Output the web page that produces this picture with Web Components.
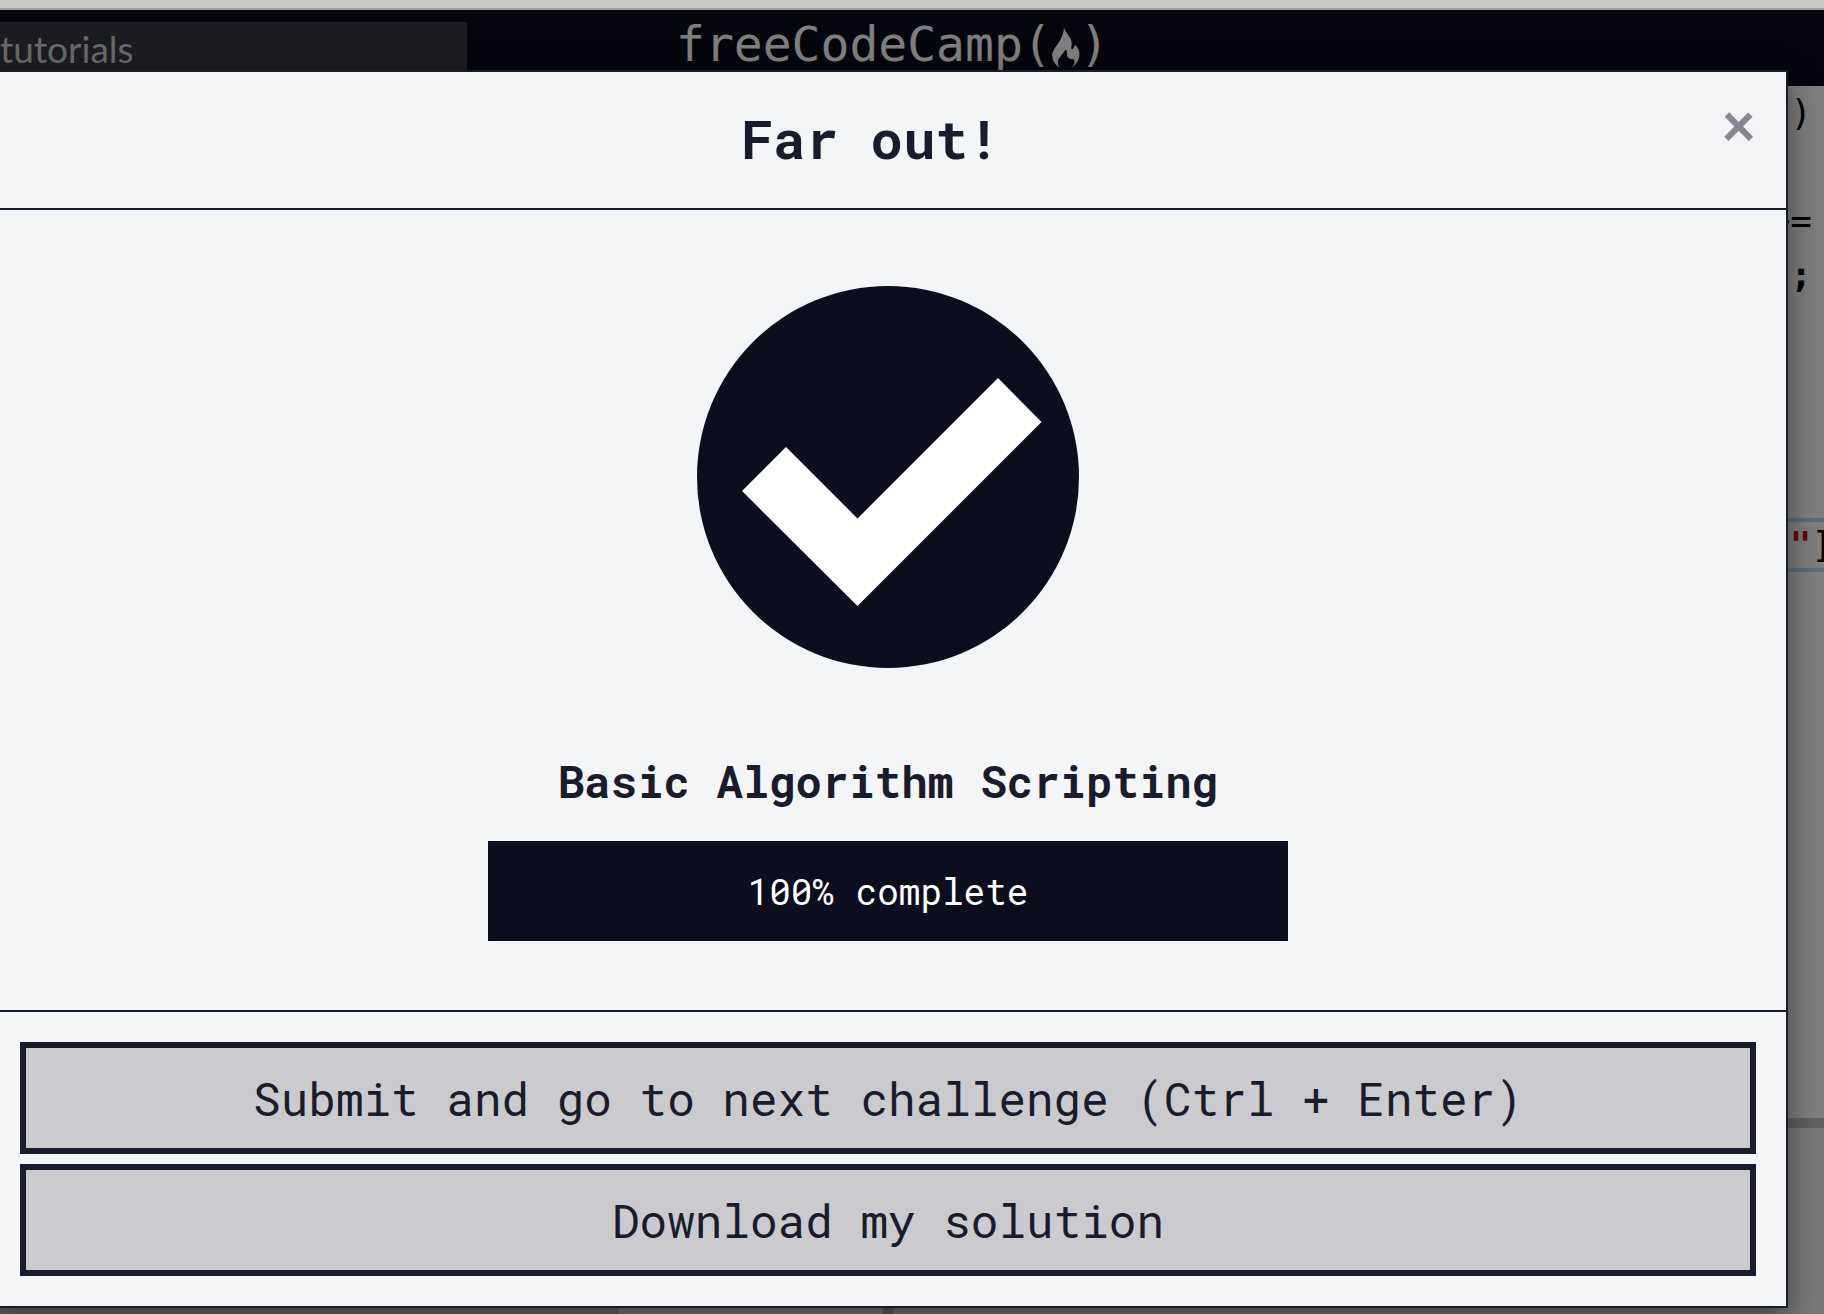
<!DOCTYPE html>
<html lang="en">
<head>
<meta charset="utf-8">
<title>freeCodeCamp</title>
<style>
  html, body { margin: 0; height: 100%; overflow: hidden; }
  body {
    --ink: #1a1b2c;
    --deep: #0c0d1d;
    --paper: #f4f5f7;
    --mono: "Roboto Mono", "DejaVu Sans Mono", monospace;
    font-family: var(--mono);
    color: var(--ink);
  }
</style>
</head>
<body>
<learn-app>
  <site-header slot="header"></site-header>
  <code-workspace slot="main"></code-workspace>
  <completion-modal slot="modal" heading="Far out!">
    <check-badge></check-badge>
    <block-progress value="100">Basic Algorithm Scripting</block-progress>
    <action-button slot="actions">Submit and go to next challenge (Ctrl + Enter)</action-button>
    <action-button slot="actions">Download my solution</action-button>
  </completion-modal>
</learn-app>

<script>
const define = (name, html, setup) => {
  const template = document.createElement('template');
  template.innerHTML = html;
  customElements.define(name, class extends HTMLElement {
    constructor() {
      super();
      this.attachShadow({ mode: 'open' }).append(template.content.cloneNode(true));
    }
    connectedCallback() { if (setup) setup(this, this.shadowRoot); }
  });
};

define('learn-app', `
  <style>
    :host { display: flex; flex-direction: column; height: 100vh; }
    .chrome { flex: none; height: 8px; background: #cacac9; border-bottom: 2px solid #a0a0a0; }
    .stage { flex: 1; min-height: 0; position: relative; display: flex; flex-direction: column; overflow: hidden; }
    .overlay { position: absolute; inset: 0; background: rgba(0, 0, 0, .5); }
    ::slotted([slot="main"]) { flex: 1; min-height: 0; }
  </style>
  <div class="chrome"></div>
  <div class="stage">
    <slot name="header"></slot>
    <slot name="main"></slot>
    <div class="overlay"><slot name="modal"></slot></div>
  </div>`);

define('site-header', `
  <style>
    :host { display: flex; align-items: flex-start; height: 76px; background: #0a0a1c; flex: none; }
    input {
      box-sizing: border-box; width: 467px; height: 54px; margin: 12px 0 0; padding: 0 0 2px; border: 0; border-radius: 0;
      background: #383846; color: #fff; font: 37px/52px Lato, sans-serif;
    }
    input::placeholder { color: #d2d2d2; opacity: 1; }
    a {
      display: flex; align-items: center; margin: 4px 0 0 209px; color: #fff; text-decoration: none;
      font: 48px/60px "DejaVu Sans Mono", monospace;
    }
    svg { width: 28px; height: 41px; display: block; align-self: flex-end; margin-bottom: 6px; }
  </style>
  <input type="search" aria-label="Search" placeholder="tutorials">
  <a href="#"><span>freeCodeCamp(</span><svg viewBox="90 50 82 122" aria-hidden="true"><path fill="currentColor" d="M125 50C127 66 149 80 148 100C148 108 144 114 149 116C154 116 156 108 158 103C163 108 171 118 171 131C171 148 162 162 148 171C156 162 159 154 154 146C148 146 136 146 134 134C133 128 135 120 130 118C124 128 106 144 107 156C107 162 108 166 112 171C98 162 90 150 90 135C90 112 124 92 125 50Z"/></svg><span>)</span></a>`);

define('code-workspace', `
  <style>
    :host { display: flex; background: #fff; color: #000; }
    .side { flex: none; width: 883px; display: flex; align-items: stretch; background: #fff; }
    .note { width: 619px; background: #d8d8d8; }
    .gutter { flex: none; width: 10px; background: #c2c2c6; }
    .work { flex: 1; min-width: 0; display: flex; flex-direction: column; }
    pre { margin: 0; flex: none; height: 1032px; text-align: right; font: 36px/54px "DejaVu Sans Mono", monospace; }
    pre div { box-sizing: border-box; height: 54px; padding-right: 12px; }
    pre .active { border: solid #b6dcf6; border-width: 4px 0; line-height: 46px; padding-right: 0; display: flex; justify-content: flex-end; }
    .active span { flex: none; margin-right: -9px; }
    b { font-weight: 700; }
    .string { color: #d01515; }
    .rule { flex: none; height: 10px; background: #c2c2c6; }
    .output { flex: 1; background: #f0f2f5; }
  </style>
  <div class="side"><div class="note"></div></div>
  <div class="gutter"></div>
  <div class="work">
    <pre><div>)</div><div></div><div>&gt;=</div><div><b>;</b></div><div></div><div></div><div></div><div></div><div class="active"><span><b class="string">"</b>]</span></div></pre>
    <div class="rule"></div>
    <div class="output"></div>
  </div>`);

define('completion-modal', `
  <style>
    :host {
      display: block; margin: 60px 36px 0 -12px; background: var(--paper); border: 2px solid var(--ink);
      box-shadow: 0 10px 30px rgba(0, 0, 0, .5);
    }
    header { display: flex; padding: 28px 30px 32px; border-bottom: 2px solid var(--ink); }
    h2 { flex: 1; margin: 0; text-align: center; font-size: 54px; line-height: 76px; font-weight: 700; }
    .close {
      align-self: flex-start; margin: 0; padding: 0; border: 0; background: none; color: #878792;
      font: 900 60px/48px Lato, sans-serif; cursor: pointer;
    }
    .body { display: flex; flex-direction: column; align-items: center; gap: 82px; padding: 76px 30px 69px; }
    footer { display: flex; flex-direction: column; gap: 10px; padding: 30px; border-top: 2px solid var(--ink); }
  </style>
  <header><h2></h2><button class="close" type="button" aria-label="Close">×</button></header>
  <div class="body"><slot></slot></div>
  <footer><slot name="actions"></slot></footer>`,
  (host, root) => { root.querySelector('h2').textContent = host.getAttribute('heading'); });

define('check-badge', `
  <style>
    :host { display: block; }
    svg { display: block; width: 382px; height: 382px; }
    circle { fill: var(--deep); }
  </style>
  <svg viewBox="0 0 382 382" role="img" aria-label="Passed">
    <circle cx="191" cy="191" r="191"/>
    <path fill="#fff" d="M45 205L89 161L160.500 232.500L301 92L344.500 136L160.500 320Z"/>
  </svg>`);

define('block-progress', `
  <style>
    :host { display: block; width: 800px; max-width: 100%; text-align: center; }
    h3 { margin: 0 0 29px; font-size: 44px; line-height: 62px; font-weight: 700; }
    .bar { background: var(--deep); color: #fff; font-size: 36px; line-height: 100px; }
  </style>
  <h3><slot></slot></h3>
  <div class="bar" role="progressbar" aria-valuemin="0" aria-valuemax="100"></div>`,
  (host, root) => {
    const bar = root.querySelector('.bar');
    const value = host.getAttribute('value');
    bar.setAttribute('aria-valuenow', value);
    bar.textContent = value + '% complete';
  });

define('action-button', `
  <style>
    :host { display: block; }
    button {
      box-sizing: border-box; display: block; width: 100%; margin: 0; padding: 18px 24px; border: 6px solid var(--ink); border-radius: 0;
      background: #cbcace; color: var(--ink); font: 46px/64px var(--mono); cursor: pointer;
    }
  </style>
  <button type="button"><slot></slot></button>`);
</script>
</body>
</html>
